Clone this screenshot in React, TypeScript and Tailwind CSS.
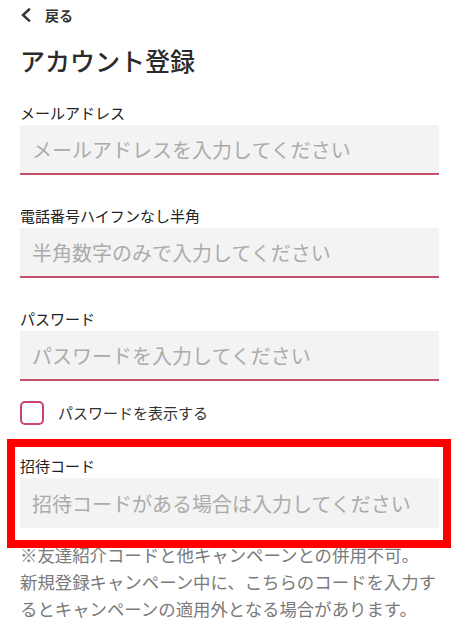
import React from "react";

function Field({ label, placeholder, type = "text", underline = true }: { label: string; placeholder: string; type?: string; underline?: boolean }) {
  return (
    <div className="flex flex-col">
      <label className="text-[15px] leading-[22px] text-[#222] mb-[1px]">{label}</label>
      <input
        type={type}
        placeholder={placeholder}
        className={
          "h-[50px] w-full bg-[#f3f3f3] px-[12px] text-[20px] text-[#333] placeholder:text-[#ababab] outline-none font-['Noto_Sans_CJK_JP',sans-serif] " +
          (underline ? "border-b-2 border-[#c4506c]" : "")
        }
      />
    </div>
  );
}

export default function App() {
  return (
    <div className="w-[459px] min-h-[630px] bg-white px-5 font-['Noto_Sans_CJK_JP',sans-serif] text-[#333] overflow-hidden">
      <div className="h-[30px] flex items-center">
        <svg width="12" height="14" viewBox="0 0 12 14" fill="none">
          <path d="M9 1.5 L3 7 L9 12.5" stroke="#333" strokeWidth="2.4" strokeLinecap="square" strokeLinejoin="miter" />
        </svg>
        <span className="ml-[13px] text-[14px] font-bold text-[#333]">戻る</span>
      </div>
      <h1 className="mt-[13px] text-[25px] leading-[34px] font-medium text-[#2b2b2b]">アカウント登録</h1>

      <div className="mt-[25px]">
        <Field label="メールアドレス" placeholder="メールアドレスを入力してください" />
      </div>
      <div className="mt-[30px]">
        <Field label="電話番号ハイフンなし半角" placeholder="半角数字のみで入力してください" />
      </div>
      <div className="mt-[30px]">
        <Field label="パスワード" placeholder="パスワードを入力してください" type="password" />
      </div>

      <div className="mt-[20px] flex items-center h-[24px]">
        <div className="w-[24px] h-[24px] border-2 border-[#c8466b] rounded-[5px] bg-white" />
        <span className="ml-[14px] text-[15px] text-[#333]">パスワードを表示する</span>
      </div>

      <div className="relative mt-[30px]">
        <Field label="招待コード" placeholder="招待コードがある場合は入力してください" underline={false} />
        <div className="absolute -top-[16px] -left-[13px] -right-[12px] -bottom-[20px] border-[8px] border-[#ff0000] pointer-events-none z-10" />
      </div>

      <p className="mt-[13px] text-[17.4px] leading-[27px] text-[#7a7a7a]">
        ※友達紹介コードと他キャンペーンとの併用不可。
        <br />
        新規登録キャンペーン中に、こちらのコードを入力するとキャンペーンの適用外となる場合があります。
      </p>
    </div>
  );
}
